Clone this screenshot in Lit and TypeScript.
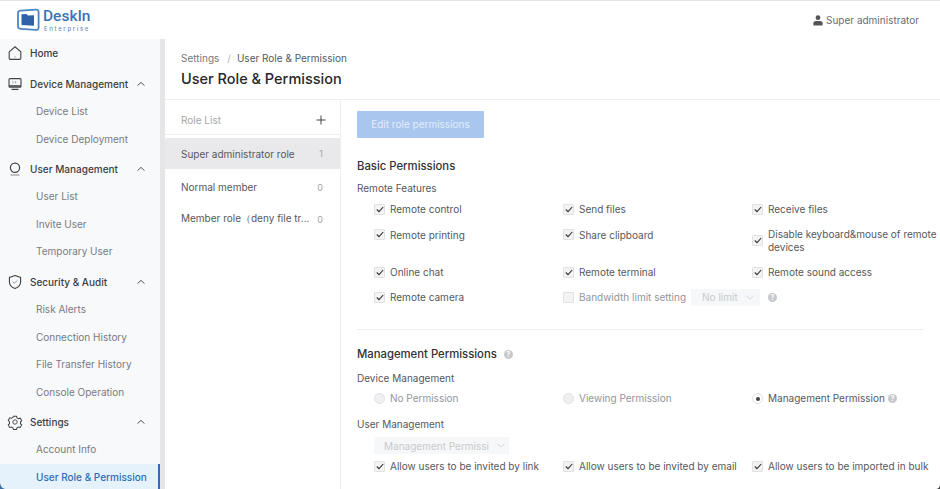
import {LitElement, css, html} from 'lit'
import {customElement} from 'lit/decorators.js'

const chevronUp = html`<svg class="chev" width="10" height="6" viewBox="0 0 10 6"><path d="M1.5 4.6 5 1.4l3.5 3.2" fill="none" stroke="#555" stroke-width="1"/></svg>`
const chevronDown = html`<svg class="down" width="8" height="5" viewBox="0 0 8 5"><path d="M.5.8 4 4 7.500.8" fill="none" stroke="#d4d6da" stroke-width="1"/></svg>`
const help = html`<span class="help">?</span>`

const icons: Record<string, unknown> = {
    home: html`<svg width="16" height="16" viewBox="0 0 16 16" fill="none" stroke="#444" stroke-width="1.1"><path d="M2.2 6.8 8 1.8l5.8 5v6.4a1.2 1.2 0 0 1-1.2 1.2H3.4a1.2 1.2 0 0 1-1.2-1.2z"/><path d="M8 11.4v1.2" stroke="#888"/></svg>`,
    device: html`<svg width="16" height="16" viewBox="0 0 16 16" fill="none" stroke="#444" stroke-width="1.1"><rect x="2" y="2.6" width="12" height="8.6" rx="1"/><path d="M2 10h12" stroke-width="1.6"/><path d="M4.5 13.4h7" stroke-width="1.3"/><path d="M5.4 5.2l1.2 1-1.2 1M8 5.2l1.2 1-1.2 1" stroke="#888" stroke-width=".8"/></svg>`,
    user: html`<svg width="16" height="16" viewBox="0 0 16 16" fill="none" stroke="#444" stroke-width="1.2"><circle cx="8" cy="6.8" r="4.6"/><path d="M3.6 14h8.8" stroke="#999"/></svg>`,
    shield: html`<svg width="16" height="16" viewBox="0 0 16 16" fill="none" stroke="#444" stroke-width="1.1"><path d="M8 1.6l5.6 1.900v4.200c0 3.200-2.300 5.600-5.600 6.900-3.300-1.300-5.600-3.700-5.600-6.900V3.500z"/><path d="M5.800 7.800l1.600 1.500 2.800-2.800" stroke="#888" stroke-width=".9"/></svg>`,
    gear: html`<svg width="16" height="16" viewBox="0 0 16 16" fill="none" stroke="#444" stroke-width="1.1"><path d="M6.300 1.800h3.400l.5 1.800 1.700.9 1.800-.5 1.600 2.800-1.300 1.400v1.800l1.300 1.300-1.600 2.800-1.800-.5-1.700.9-.5 1.700H6.300l-.5-1.700-1.700-.9-1.800.5-1.600-2.800 1.300-1.300V7.800L.7 6.400l1.600-2.800 1.800.5 1.700-.9z" transform="translate(.6 .5) scale(.92)"/><circle cx="8" cy="8" r="2.200" stroke-width=".9"/></svg>`,
}

const groups = [
    {name: 'Device Management', icon: 'device', items: ['Device List', 'Device Deployment']},
    {name: 'User Management', icon: 'user', items: ['User List', 'Invite User', 'Temporary User']},
    {name: 'Security & Audit', icon: 'shield', items: ['Risk Alerts', 'Connection History', 'File Transfer History', 'Console Operation']},
    {name: 'Settings', icon: 'gear', items: ['Account Info', 'User Role & Permission']},
]

const roles = [
    {name: 'Super administrator role', count: 1, active: true},
    {name: 'Normal member', count: 0, active: false},
    {name: 'Member role（deny file tr...', count: 0, active: false},
]

@customElement('app-root')
export class AppRoot extends LitElement
{
    check(label: string)
    {
        return html`<label class="opt"><span class="box"><svg width="8" height="7" viewBox="0 0 8 7"><path d="M.8 3.500l2.200 2.200L7.200 1" fill="none" stroke="#333" stroke-width="1.100"/></svg></span><span>${label}</span></label>`
    }

    radio(label: string, on = false, extra: unknown = '')
    {
        return html`<label class="opt ${on ? '' : 'off'}"><span class="radio ${on ? 'on' : ''}"></span><span>${label}</span>${extra}</label>`
    }

    render()
    {
        return html`
            <header class="top">
                <div class="logo">
                    <svg width="25" height="25" viewBox="0 0 25 25"><path d="M4.500 2.600 20 1.600c1.600-.1 2.600.9 2.600 2.400v15.500c0 1.500-1 2.500-2.600 2.400L4.500 20.800C2.800 20.700 2 19.700 2 18.300V5.100c0-1.500.8-2.400 2.500-2.500z" fill="none" stroke="#4d86c2" stroke-width="1.800"/><path d="M5.500 6.300 10.500 6l1.500 1.500 6-.3v10.600l-12.500-.8z" fill="#2f63a8"/></svg>
                    <div class="logo-text"><span class="brand">DeskIn</span><span class="ent">Enterprise</span></div>
                </div>
                <div class="who">
                    <svg width="10" height="11" viewBox="0 0 10 11" fill="#555"><circle cx="5" cy="2.700" r="2.400"/><path d="M.4 10.600V8.300c0-1.500 1.300-2.300 2.600-2.300h4c1.300 0 2.600.8 2.600 2.300v2.300z"/></svg>
                    <span>Super administrator</span>
                </div>
            </header>
            <div class="body">
                <nav class="side">
                    <div class="head home">${icons.home}<span>Home</span></div>
                    ${groups.map(g => html`
                        <div class="group">
                            <div class="head">${icons[g.icon]}<span>${g.name}</span>${chevronUp}</div>
                            ${g.items.map(i => html`<div class="sub ${i == 'User Role & Permission' ? 'current' : ''}">${i}</div>`)}
                        </div>
                    `)}
                </nav>
                <div class="rail"></div>
                <main class="main">
                    <div class="page-head">
                        <div class="crumbs"><span>Settings</span><i>/</i><b>User Role & Permission</b></div>
                        <h1>User Role & Permission</h1>
                    </div>
                    <div class="split">
                        <section class="roles">
                            <div class="roles-head"><span>Role List</span>
                                <svg width="10" height="10" viewBox="0 0 10 10"><path d="M5 .5v9M.5 5h9" stroke="#444" stroke-width="1"/></svg>
                            </div>
                            ${roles.map(r => html`<div class="role ${r.active ? 'active' : ''}"><span>${r.name}</span><em>${r.count}</em></div>`)}
                        </section>
                        <section class="perm">
                            <button class="edit">Edit role permissions</button>
                            <h2 class="basic">Basic Permissions</h2>
                            <h3>Remote Features</h3>
                            <div class="grid">
                                ${this.check('Remote control')}${this.check('Send files')}${this.check('Receive files')}
                                ${this.check('Remote printing')}${this.check('Share clipboard')}${this.check('Disable keyboard&mouse of remote devices')}
                                ${this.check('Online chat')}${this.check('Remote terminal')}${this.check('Remote sound access')}
                                ${this.check('Remote camera')}
                                <div class="opt off span2">
                                    <span class="box blank"></span><span>Bandwidth limit setting</span>
                                    <span class="select small">No limit ${chevronDown}</span>
                                    ${help}
                                </div>
                            </div>
                            <hr>
                            <h2>Management Permissions ${help}</h2>
                            <h3 class="dev">Device Management</h3>
                            <div class="grid radios">
                                ${this.radio('No Permission')}${this.radio('Viewing Permission')}${this.radio('Management Permission', true, help)}
                            </div>
                            <h3 class="usr">User Management</h3>
                            <div class="select wide">Management Permissi ${chevronDown}</div>
                            <div class="grid last">
                                ${this.check('Allow users to be invited by link')}${this.check('Allow users to be invited by email')}${this.check('Allow users to be imported in bulk')}
                            </div>
                        </section>
                    </div>
                </main>
            </div>
            <svg class="corner left" width="6" height="6" viewBox="0 0 6 6"><path d="M0 0v6h5C2.500 5.500.5 3.500 0 0z" fill="#3f6f9f"/></svg>
            <svg class="corner right" width="4" height="4" viewBox="0 0 4 4"><path d="M4 0v4H0c2 0 3.500-1.500 4-4z" fill="#444"/></svg>
        `
    }

    static styles = css`
        :host
        {
            display: block;
            position: relative;
            width: 940px;
            height: 489px;
            overflow: hidden;
            background: #fff;
            font-family: "Inter", "Liberation Sans", sans-serif;
            font-size: 10px;
            color: #56585c;
            box-sizing: border-box;
            border-top: 1px solid #e4e4e4;
        }

        .corner { position: absolute; bottom: 0; }
        .left { left: 0; }
        .right { right: 0; }

        .top
        {
            height: 38px;
            display: flex;
            align-items: center;
            justify-content: space-between;
            padding: 0 21px 0 16px;
            box-sizing: border-box;
        }

        .logo { display: flex; align-items: center; gap: 2px; }
        .logo-text { display: flex; flex-direction: column; }
        .brand { font-family: Roboto, sans-serif; font-size: 15.500px; font-weight: 500; color: #3c72b3; line-height: 15px; }
        .ent { font-size: 6px; color: #6d8fb8; letter-spacing: 1.650px; margin: 1px 0 0 1px; line-height: 7px; font-weight: 500; white-space: nowrap; }

        .who { display: flex; align-items: center; gap: 3px; color: #6b6d72; }

        .body { display: flex; height: 450px; background: #fff; }

        .side { width: 160px; flex: none; background: #f8f9fa; overflow: hidden; }
        .rail { width: 5px; flex: none; background: #e6e6e8; }

        .head
        {
            height: 28px;
            display: flex;
            align-items: center;
            padding-left: 7px;
            gap: 7px;
            color: #3c3e42;
            font-weight: 500;
            white-space: nowrap;
        }

        .home { margin-bottom: 3px; }
        .group + .group { margin-top: 2.250px; }
        .chev { margin-left: auto; margin-right: 14px; }

        .sub
        {
            height: 27.500px;
            line-height: 27px;
            padding-left: 36px;
            color: #797b7f;
            box-sizing: border-box;
        }

        .current
        {
            background: #e6f2fb;
            color: #2f6db5;
            border-right: 2px solid #2f6db5;
            font-weight: 500;
        }

        .main { flex: 1; min-width: 0; display: flex; flex-direction: column; }

        .page-head
        {
            height: 61px;
            padding: 13px 0 0 16px;
            box-sizing: border-box;
            border-bottom: 1px solid #eeeff1;
            flex: none;
        }

        .crumbs { display: flex; gap: 8px; color: #77797d; line-height: 13px; }
        .crumbs i { color: #b5b6b9; font-style: normal; margin-right: -2px; }
        .crumbs b { font-weight: 400; color: #56585c; }

        h1
        {
            margin: 5px 0 0;
            font-size: 14.500px;
            font-weight: 500;
            color: #25272b;
            line-height: 18px;
        }

        .split { display: flex; flex: 1; min-height: 0; }

        .roles { width: 175px; flex: none; border-right: 1px solid #eeeff1; box-sizing: content-box; }

        .roles-head
        {
            height: 35px;
            display: flex;
            align-items: center;
            justify-content: space-between;
            padding: 5px 14px 0 16px;
            margin-bottom: 3px;
            border-bottom: 1px solid #eeeff1;
            color: #a4a6a9;
            box-sizing: border-box;
        }

        .role
        {
            height: 32px;
            display: flex;
            align-items: center;
            justify-content: space-between;
            padding: 0 17px 0 16px;
            white-space: nowrap;
        }

        .role em { font-style: normal; color: #a4a6a9; font-size: 9px; }
        .active { background: #e9e9eb; height: 31px; margin-bottom: 2px; }

        .perm { flex: 1; padding: 11px 16px 0; min-width: 0; }

        .edit
        {
            display: block;
            width: 127px;
            height: 27px;
            border: none;
            border-radius: 1px;
            background: #a9c6ef;
            color: #e3edfb;
            font: inherit;
            padding: 0 0 2px;
        }

        h2
        {
            margin: 0;
            font-size: 11.300px;
            font-weight: 500;
            color: #303236;
            line-height: 14px;
            display: flex;
            align-items: center;
            gap: 7px;
        }

        .basic { margin-top: 21px; }

        h3
        {
            margin: 9px 0 0;
            font-size: 10px;
            font-weight: 400;
            color: #56585c;
            line-height: 13px;
        }

        .grid
        {
            display: grid;
            grid-template-columns: 189px 189px 1fr;
            align-items: start;
            row-gap: 12.400px;
            margin: 8px -16px 0 17px;
        }

        .opt
        {
            display: flex;
            align-items: center;
            gap: 5px;
            line-height: 12.500px;
            min-height: 13px;
        }

        .span2 { grid-column: span 2; height: 13px; }
        .off { color: #939599; }

        .box, .radio
        {
            width: 9px;
            height: 9px;
            flex: none;
            border: 1px solid #e0e1e3;
            background: #f3f3f4;
            display: flex;
            align-items: center;
            justify-content: center;
        }

        .box { border-radius: 1px; }
        .radio { border-radius: 50%; background: #f0f0f2; }

        .radio.on { background: #fff; }
        .radio.on::after { content: ""; width: 4px; height: 4px; flex: none; border-radius: 50%; background: #444; }

        .select
        {
            display: flex;
            align-items: center;
            gap: 8px;
            background: #f6f7f8;
            color: #c8cacd;
            height: 17px;
            flex: none;
            box-sizing: border-box;
        }

        .small { width: 69px; padding-left: 11px; }
        .wide { width: 135px; margin: 6px 0 0 17px; padding-left: 10px; white-space: nowrap; }

        .help
        {
            width: 9px;
            height: 9px;
            border-radius: 50%;
            background: #c6c8cb;
            color: #fff;
            font-size: 7px;
            font-weight: 700;
            line-height: 9px;
            text-align: center;
            flex: none;
        }

        .opt .help { margin-left: -2px; }
        .span2 .help { margin-left: 3px; }

        hr { border: none; border-top: 1px solid #eeeff1; margin: 25px 0 17px; }

        .dev { margin-top: 11px; }
        .radios { margin-top: 7px; }
        .usr { margin-top: 13px; }
        .last { margin-top: 6px; }
    `
}

declare global
{
    interface HTMLElementTagNameMap
    {
        'app-root': AppRoot
    }
}
